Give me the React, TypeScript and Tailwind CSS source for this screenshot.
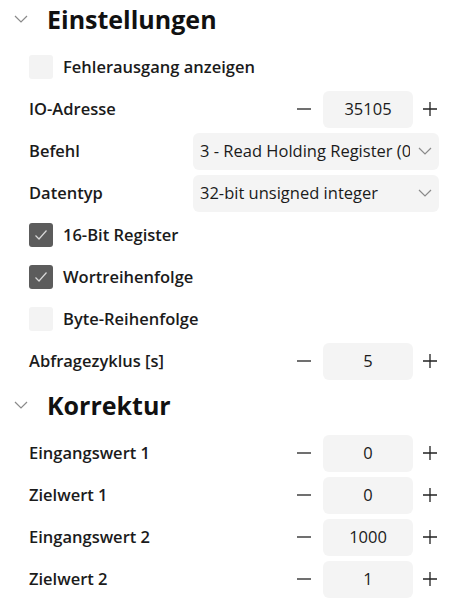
import type { ReactNode } from 'react';

const font = { fontFamily: '"Open Sans", "Noto Sans", sans-serif' };

function Chevron({ className }: { className?: string }) {
  return (
    <svg width="14" height="8" viewBox="0 0 14 8" fill="none" className={className}>
      <path d="M1 1l6 6 6-6" stroke="currentColor" strokeWidth="1.2" />
    </svg>
  );
}

function SectionHeader({ title }: { title: string }) {
  return (
    <div className="h-[38px] flex items-center">
      <Chevron className="ml-[14px] text-[#8a8a8a]" />
      <h2 className="ml-[19px] text-[25px] font-bold text-[#111] leading-none">{title}</h2>
    </div>
  );
}

function Row({ children }: { children: ReactNode }) {
  return <div className="h-[42px] flex items-center pl-[29px] pr-[13px]">{children}</div>;
}

function Label({ children }: { children: ReactNode }) {
  return <span className="text-[16.5px] font-semibold text-[#1b1b1b] whitespace-nowrap">{children}</span>;
}

function Checkbox({ label, checked }: { label: string; checked?: boolean }) {
  return (
    <Row>
      <span
        className={[
          'w-[24px] h-[24px] rounded-[3px] flex items-center justify-center',
          checked ? 'bg-[#5c5c5c]' : 'bg-[#f3f3f3]',
        ].join(' ')}
      >
        {checked && (
          <svg width="14" height="12" viewBox="0 0 14 12" fill="none">
            <path d="M1.5 6.5l3.5 3.5 7.5-8.5" stroke="#d8d8d8" strokeWidth="1.2" />
          </svg>
        )}
      </span>
      <span className="ml-[10px]">
        <Label>{label}</Label>
      </span>
    </Row>
  );
}

function Stepper({ label, value }: { label: string; value: string }) {
  return (
    <Row>
      <Label>{label}</Label>
      <div className="flex-1" />
      <svg width="14" height="14" viewBox="0 0 14 14" className="text-[#222]">
        <path d="M0 7h14" stroke="currentColor" strokeWidth="1.3" />
      </svg>
      <div className="ml-[12px] w-[90px] h-[37px] rounded-[6px] bg-[#f4f4f4] flex items-center justify-center text-[16.5px] text-[#1b1b1b]">
        {value}
      </div>
      <svg width="14" height="14" viewBox="0 0 14 14" className="ml-[10px] mr-[2px] text-[#222]">
        <path d="M0 7h14M7 0v14" stroke="currentColor" strokeWidth="1.3" />
      </svg>
    </Row>
  );
}

function Select({ label, value }: { label: string; value: string }) {
  return (
    <Row>
      <span className="w-[164px] shrink-0">
        <Label>{label}</Label>
      </span>
      <div className="flex-1 min-w-0 h-[37px] rounded-[6px] bg-[#f4f4f4] flex items-center pl-[7px] pr-[7px]">
        <span className="flex-1 min-w-0 overflow-hidden whitespace-nowrap text-[16.5px] text-[#1b1b1b]">{value}</span>
        <Chevron className="ml-[8px] shrink-0 text-[#8a8a8a]" />
      </div>
    </Row>
  );
}

export default function App() {
  return (
    <div className="w-[452px] h-[607px] bg-white overflow-hidden" style={font}>
      <SectionHeader title="Einstellungen" />
      <div className="h-[8px]" />
      <Checkbox label="Fehlerausgang anzeigen" />
      <Stepper label="IO-Adresse" value="35105" />
      <Select label="Befehl" value="3 - Read Holding Register (0x03)" />
      <Select label="Datentyp" value="32-bit unsigned integer" />
      <Checkbox label="16-Bit Register" checked />
      <Checkbox label="Wortreihenfolge" checked />
      <Checkbox label="Byte-Reihenfolge" />
      <Stepper label="Abfragezyklus [s]" value="5" />
      <div className="h-[4px]" />
      <SectionHeader title="Korrektur" />
      <div className="h-[8px]" />
      <Stepper label="Eingangswert 1" value="0" />
      <Stepper label="Zielwert 1" value="0" />
      <Stepper label="Eingangswert 2" value="1000" />
      <Stepper label="Zielwert 2" value="1" />
    </div>
  );
}
